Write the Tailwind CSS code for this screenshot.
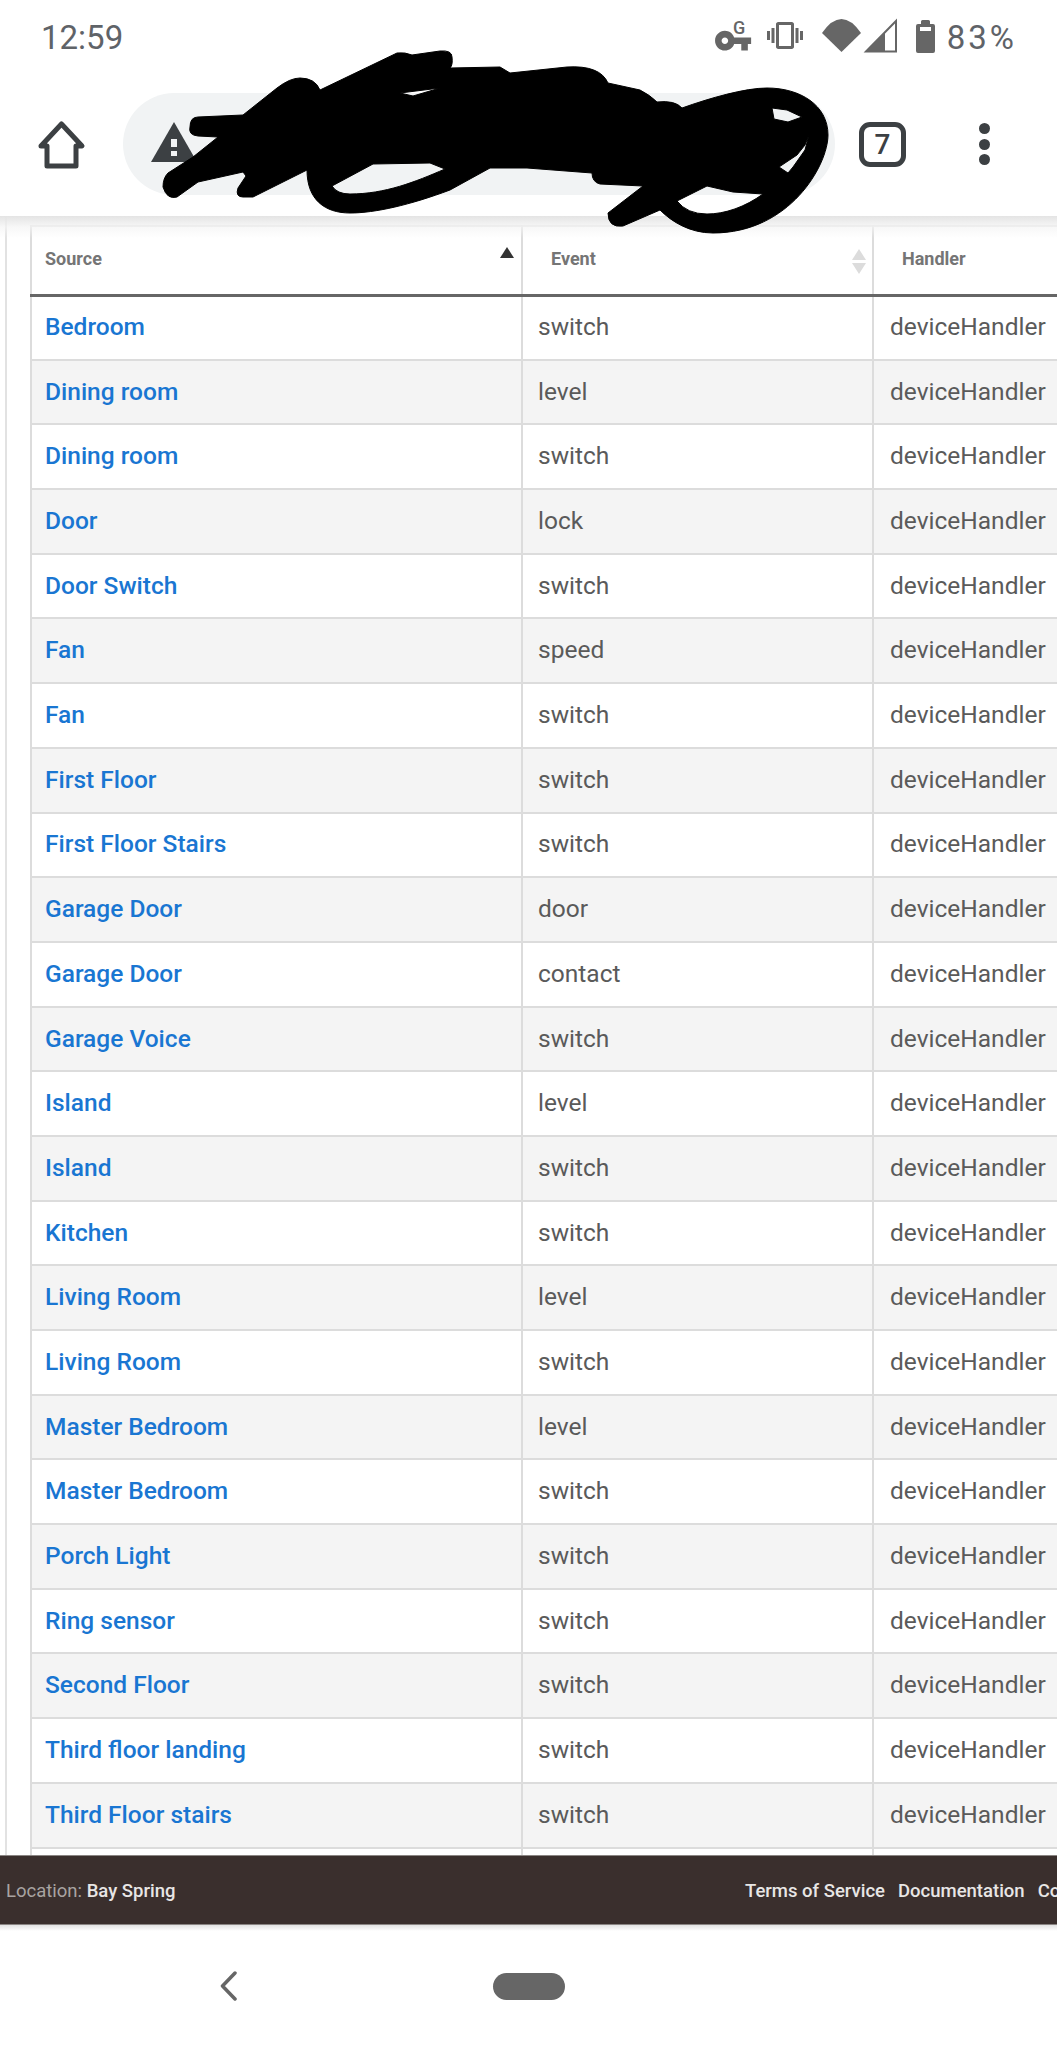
<!DOCTYPE html>
<html lang="en">
<head>
<meta charset="UTF-8">
<title>App Events</title>
<script src="https://cdn.jsdelivr.net/npm/@tailwindcss/browser@4"></script>
</head>
<body class="bg-white font-['Roboto',sans-serif]">
<div class="relative w-[1057px] h-[2048px] overflow-hidden flex flex-col bg-white">

  <!-- phone status bar -->
  <div class="h-[74px] shrink-0 relative flex items-center justify-between pl-[41px] pr-[40px] bg-white text-[#5f6368]">
    <span class="text-[33px] leading-none">12:59</span>
    <div class="flex items-center">
      <svg class="mt-[-2px]" width="232" height="40" viewBox="715 16 232 40" fill="#666">
        <g transform="translate(713.4 21) scale(1.64)"><path d="M12.65 10C11.83 7.67 9.61 6 7 6c-3.31 0-6 2.69-6 6s2.69 6 6 6c2.61 0 4.83-1.67 5.65-4H17v4h4v-4h2v-4H12.65zM7 14c-1.1 0-2-.9-2-2s.9-2 2-2 2 .9 2 2-.9 2-2 2z"/></g>
        <text x="733" y="34" font-family="Roboto" font-size="18" font-weight="500">G</text>
        <g transform="translate(767 17.5) scale(1.5)"><path d="M0 15h2V9H0v6zm3 2h2V7H3v10zm19-8v6h2V9h-2zm-3 8h2V7h-2v10zM16.5 3h-9C6.67 3 6 3.67 6 4.500v15c0 .83.67 1.5 1.5 1.5h9c.83 0 1.5-.67 1.5-1.5v-15c0-.83-.67-1.5-1.5-1.5zM16 19H8V5h8v14z"/></g>
        <path d="M822 33Q841.5 5 861 33L841.500 52Z"/>
        <path d="M866 51.500L896 21V51.500Z" fill="none" stroke="#666" stroke-width="2"/>
        <path d="M865 52L885 32V52Z"/>
        <path d="M921 24V21.500Q921 20 922.500 20H928.500Q930 20 930 21.500V24H933Q935 24 935 26V51Q935 53 933 53H918Q916 53 916 51V26Q916 24 918 24Z"/>
        <rect x="920" y="27" width="11" height="4" fill="#fff"/>
      </svg>
      <span class="text-[33px] leading-none tracking-[3px]">83%</span>
    </div>
  </div>

  <!-- browser toolbar -->
  <div class="h-[142px] shrink-0 flex items-center bg-white relative z-10">
    <svg class="ml-[35px] shrink-0" width="54" height="52" viewBox="35 118 54 52" fill="none" stroke="#3c4043" stroke-width="5" stroke-linejoin="round">
      <path d="M41 145L61.500 123L82 145H76V165H47V145Z"/>
    </svg>
    <div class="ml-[34px] w-[712px] h-[102px] rounded-full bg-[#f1f3f4] flex items-center shrink-0 mt-[-2px]">
      <svg class="ml-[28px] mb-[4px]" width="46" height="40" viewBox="151 122 46 40">
        <path d="M174 122L197 162H151Z" fill="#3c4043"/>
        <rect x="171" y="139" width="6" height="8" fill="#f1f3f4"/>
        <rect x="171" y="151" width="6" height="5" fill="#f1f3f4"/>
      </svg>
    </div>
    <div class="ml-[24px] w-[47px] h-[45px] border-[5px] border-[#3c4043] rounded-[11px] flex items-center justify-center text-[28px] font-medium text-[#3c4043] shrink-0 mt-[-1px]">7</div>
    <div class="ml-[73px] flex flex-col gap-[4.500px] shrink-0 mt-[-2px]">
      <span class="w-[11px] h-[11px] rounded-full bg-[#3c4043]"></span>
      <span class="w-[11px] h-[11px] rounded-full bg-[#3c4043]"></span>
      <span class="w-[11px] h-[11px] rounded-full bg-[#3c4043]"></span>
    </div>
  </div>

  <!-- events table -->
  <div class="relative h-[1639px] shrink-0 overflow-hidden pl-[30px] pt-[9px] bg-white">
    <div class="absolute left-[5px] top-0 bottom-0 w-[2px] bg-[#e2e2e2]"></div>
    <table class="table-fixed border-collapse w-[1100px] text-[24.5px] text-[#5a5a5a] [&_td]:border-2 [&_td]:border-[#dcdcdc] [&_td]:px-[13px] [&_td]:py-0 [&_td:nth-child(2)]:px-[15px] [&_td:nth-child(3)]:px-[16px] [&_tbody_tr]:h-[64.7px] [&_tbody_tr:nth-child(even)]:bg-[#f4f4f4] [&_td:first-child]:text-[#1976d2] [&_td:first-child]:font-medium">
      <colgroup><col class="w-[491px]"><col class="w-[351px]"><col></colgroup>
      <thead>
        <tr class="h-[69px] text-left text-[18px] text-[#757575] border-t-2 border-t-[#e2e2e2] border-b-[3px] border-b-[#666] [&_th]:relative [&_th]:border-x-2 [&_th]:border-[#dcdcdc] [&_th]:font-bold">
          <th class="pl-[13px] pb-[3px]">Source<span class="absolute right-[7px] top-[20px] w-0 h-0 border-x-[7px] border-x-transparent border-b-[11px] border-b-[#333]"></span></th>
          <th class="pl-[28px] pb-[3px]">Event<span class="absolute right-[6px] top-[22px] w-0 h-0 border-x-[7px] border-x-transparent border-b-[11px] border-b-[#dcdcdc]"></span><span class="absolute right-[6px] top-[36px] w-0 h-0 border-x-[7px] border-x-transparent border-t-[11px] border-t-[#dcdcdc]"></span></th>
          <th class="pl-[28px] pb-[3px]">Handler</th>
        </tr>
      </thead>
      <tbody>
        <tr><td>Bedroom</td><td>switch</td><td>deviceHandler</td></tr>
        <tr><td>Dining room</td><td>level</td><td>deviceHandler</td></tr>
        <tr><td>Dining room</td><td>switch</td><td>deviceHandler</td></tr>
        <tr><td>Door</td><td>lock</td><td>deviceHandler</td></tr>
        <tr><td>Door Switch</td><td>switch</td><td>deviceHandler</td></tr>
        <tr><td>Fan</td><td>speed</td><td>deviceHandler</td></tr>
        <tr><td>Fan</td><td>switch</td><td>deviceHandler</td></tr>
        <tr><td>First Floor</td><td>switch</td><td>deviceHandler</td></tr>
        <tr><td>First Floor Stairs</td><td>switch</td><td>deviceHandler</td></tr>
        <tr><td>Garage Door</td><td>door</td><td>deviceHandler</td></tr>
        <tr><td>Garage Door</td><td>contact</td><td>deviceHandler</td></tr>
        <tr><td>Garage Voice</td><td>switch</td><td>deviceHandler</td></tr>
        <tr><td>Island</td><td>level</td><td>deviceHandler</td></tr>
        <tr><td>Island</td><td>switch</td><td>deviceHandler</td></tr>
        <tr><td>Kitchen</td><td>switch</td><td>deviceHandler</td></tr>
        <tr><td>Living Room</td><td>level</td><td>deviceHandler</td></tr>
        <tr><td>Living Room</td><td>switch</td><td>deviceHandler</td></tr>
        <tr><td>Master Bedroom</td><td>level</td><td>deviceHandler</td></tr>
        <tr><td>Master Bedroom</td><td>switch</td><td>deviceHandler</td></tr>
        <tr><td>Porch Light</td><td>switch</td><td>deviceHandler</td></tr>
        <tr><td>Ring sensor</td><td>switch</td><td>deviceHandler</td></tr>
        <tr><td>Second Floor</td><td>switch</td><td>deviceHandler</td></tr>
        <tr><td>Third floor landing</td><td>switch</td><td>deviceHandler</td></tr>
        <tr><td>Third Floor stairs</td><td>switch</td><td>deviceHandler</td></tr>
        <tr><td></td><td></td><td></td></tr>
      </tbody>
    </table>
    <!-- toolbar shadow falls over the table head -->
    <div class="absolute left-0 right-0 top-0 h-[22px] bg-gradient-to-b from-[#e4e4e4] via-[#f4f4f4]/70 to-transparent"></div>
  </div>

  <!-- app footer -->
  <div class="h-[70px] shrink-0 flex items-center justify-between pt-[3px] bg-[#3a2f2d] border-y border-[#8a8583] text-[18.5px] font-medium text-[#e8e6e5] whitespace-nowrap overflow-hidden relative">
    <div class="pl-[6px]"><span class="font-normal text-[#a8a3a1]">Location:</span> Bay Spring</div>
    <div class="flex gap-[13px] w-[312px] shrink-0"><span>Terms of Service</span><span>Documentation</span><span>Contact</span></div>
  </div>

  <!-- phone nav bar -->
  <div class="flex-1 relative bg-white bg-gradient-to-b from-[#e2e2e2] to-white to-[6px]">
    <div class="flex items-center pt-[46px] pl-[218px]">
      <svg width="22" height="30" viewBox="0 0 22 30" fill="none" stroke="#666" stroke-width="3.500" stroke-linecap="round" stroke-linejoin="round">
        <path d="M17 2L4.500 15L17 28"/>
      </svg>
      <div class="ml-[253px] w-[72px] h-[27px] rounded-full bg-[#666]"></div>
    </div>
  </div>

  <!-- black scribble over the address -->
  <svg class="absolute left-0 top-0 z-20 pointer-events-none" width="1057" height="260" viewBox="0 0 1057 260">
    <path fill="#000" fill-rule="evenodd" stroke="#000" stroke-width="1" stroke-linejoin="round" d="M163 187Q163 178 168 173L193 157L218 137L198 136Q188 135 190 127Q190 117 198 117L243 115L277 88Q290 78 300 78Q315 78 320 90L397 53Q405 52 412 55L440 51Q452 50 452 57Q453 65 450 68L500 67L510 73L567 67Q600 65 608 83L640 90Q650 95 657 102Q675 100 682 108C710 98 745 88 767 88C800 88 828 105 828 135C828 165 790 233 713 233C690 233 672 222 660 210L623 226Q608 228 608 213L643 186L600 184Q592 182 592 173L527 168L490 168L450 190C410 205 375 213 350 213C325 213 307 200 307 170L253 197L243 197Q235 197 238 188L246 176L243 172L198 182L177 197Q167 200 163 187Z M400 93L440 88L413 96Z M332 186L373 164L430 163L445 169C415 182 385 194 350 194Q337 194 332 186Z M772 108L787 110L802 117L788 122L774 119Z M809 135L805 150L793 167L788 173L779 167L797 155L805 145Z M677 201L707 186L733 192L763 194C745 207 725 214 707 214Q687 214 677 201Z"/>
  </svg>
</div>
</body>
</html>
